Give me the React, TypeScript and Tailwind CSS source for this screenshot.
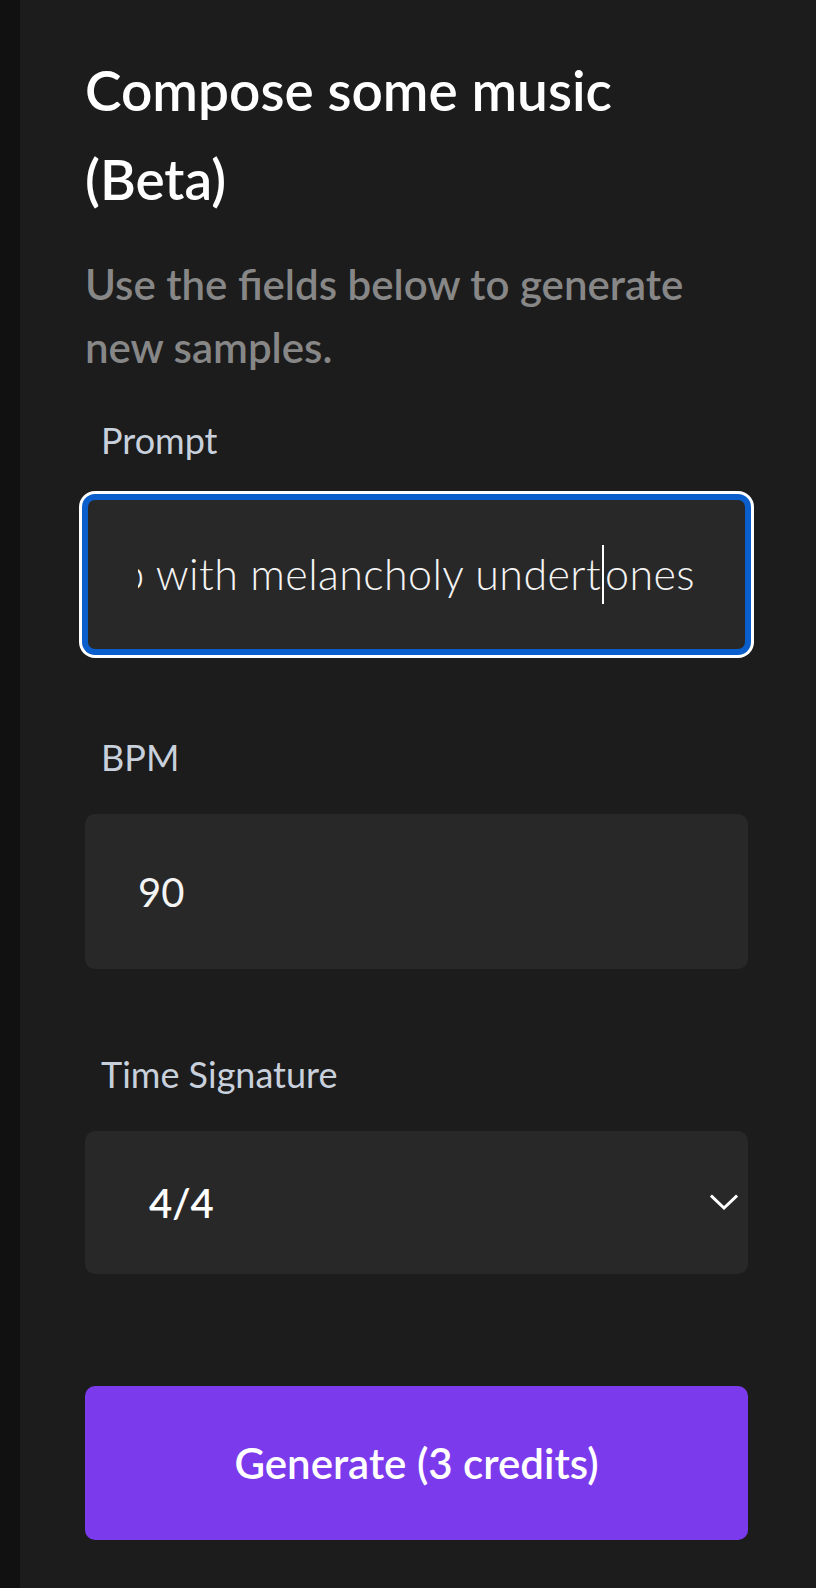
interface Field {
  id: string;
  label: string;
}

const fields: Record<string, Field> = {
  prompt: { id: "prompt", label: "Prompt" },
  bpm: { id: "bpm", label: "BPM" },
  timeSignature: { id: "time-signature", label: "Time Signature" },
};

function FieldLabel({ htmlFor, children }: { htmlFor: string; children: string }) {
  return (
    <label
      htmlFor={htmlFor}
      className="ml-4 block text-[36px] font-normal leading-[42px] text-[#c8d0dc]"
    >
      {children}
    </label>
  );
}

export default function App() {
  return (
    <div className="flex min-h-screen w-full overflow-hidden font-[Lato,sans-serif]">
      <div className="w-[20px] shrink-0 bg-[#111111]" />

      <main className="min-w-0 flex-1 bg-[#1c1c1c] pt-[46px] pl-[65px] pr-[68px] pb-12">
        <h1 className="text-[55px] font-semibold leading-[89px] text-white">
          Compose some music (Beta)
        </h1>
        <p className="mt-[29px] text-[42px] font-semibold leading-[63px] text-[#878787]">
          Use the fields below to generate new samples.
        </p>

        <div className="mt-10">
          <FieldLabel htmlFor={fields.prompt.id}>{fields.prompt.label}</FieldLabel>
          {/* focused text field, scrolled to the end of the prompt */}
          <div
            id={fields.prompt.id}
            className="mt-9 flex h-[155px] items-center rounded-[10px] border-[3px] border-[#0b5fcc] bg-[#282828] px-[50px] shadow-[0_0_0_3px_#0b5fcc,0_0_0_6px_#ffffff]"
          >
            <div className="flex min-w-0 flex-1 justify-end overflow-hidden whitespace-nowrap text-[43px] font-light tracking-[0.4px] text-[#f4f4f4]">
              <span className="flex shrink-0 items-center">
                Lo-fi hip hop with melancholy undert
                <span className="mx-px inline-block h-[59px] w-[2px] bg-white" />
                ones
              </span>
            </div>
          </div>
        </div>

        <div className="mt-[84px]">
          <FieldLabel htmlFor={fields.bpm.id}>{fields.bpm.label}</FieldLabel>
          <input
            id={fields.bpm.id}
            type="text"
            readOnly
            value="90"
            className="mt-9 block h-[155px] w-full rounded-[10px] bg-[#282828] pl-[53px] text-[40px] font-normal text-[#f4f4f4] outline-none"
          />
        </div>

        <div className="mt-[84px]">
          <FieldLabel htmlFor={fields.timeSignature.id}>{fields.timeSignature.label}</FieldLabel>
          <div
            id={fields.timeSignature.id}
            className="mt-9 flex h-[143px] items-center justify-between rounded-[10px] bg-[#282828] pl-16 pr-[10px]"
          >
            <span className="text-[40px] font-semibold text-white">4/4</span>
            <svg width="28" height="17" viewBox="0 0 28 17" fill="none" aria-hidden="true">
              <polyline
                points="2,2.5 14,14 26,2.5"
                stroke="white"
                strokeWidth="3"
                strokeLinecap="square"
              />
            </svg>
          </div>
        </div>

        <button
          type="button"
          className="mt-[112px] flex h-[154px] w-full items-center justify-center rounded-[10px] bg-[#7c3aed] text-[42px] font-semibold text-white"
        >
          Generate (3 credits)
        </button>
      </main>
    </div>
  );
}
